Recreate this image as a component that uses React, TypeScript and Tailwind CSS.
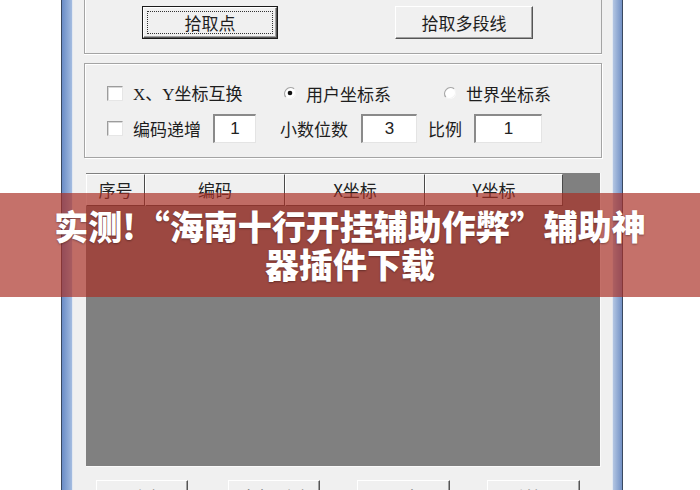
import type { ReactNode } from "react";

const font = { fontFamily: '"Noto Sans CJK SC", "Noto Sans", sans-serif' };

function Btn({
  children,
  focused,
  className,
}: {
  children?: ReactNode;
  focused?: boolean;
  className?: string;
}) {
  return (
    <div
      className={`bg-[#f0f0f0] ${focused ? "border border-[#1a1a1a]" : ""} ${className ?? ""}`}
    >
      <div className="h-full w-full border-t border-l border-white border-r border-b border-r-[#555] border-b-[#555] shadow-[inset_-1px_-1px_0_#a0a0a0] p-[3px]">
        <div
          className={`flex h-full w-full items-center justify-center text-[17px] text-[#1e1e1e] ${
            focused ? "border border-dotted border-[#333]" : ""
          }`}
        >
          {children}
        </div>
      </div>
    </div>
  );
}

function Check() {
  return (
    <div className="h-[15px] w-[16px] shrink-0 border-t border-l border-[#9c9c9c] border-r border-b border-r-[#e6e6e6] border-b-[#e6e6e6] bg-white shadow-[inset_1px_1px_0_#d8d8d8]" />
  );
}

function Radio({ checked }: { checked?: boolean }) {
  return (
    <svg width="14" height="14" viewBox="0 0 14 14" className="shrink-0">
      <circle cx="7" cy="7" r="6" fill="#fff" />
      <path d="M2.8 11.2 A6 6 0 0 1 11.2 2.8" fill="none" stroke="#a8a8a8" strokeWidth="1.3" />
      <path d="M11.2 2.8 A6 6 0 0 1 2.8 11.2" fill="none" stroke="#f4f4f4" strokeWidth="1.2" />
      {checked && <circle cx="7" cy="7" r="2.3" fill="#111" />}
    </svg>
  );
}

function Field({ value, w }: { value: string; w: string }) {
  return (
    <div
      className={`${w} flex h-[29px] shrink-0 items-center justify-center border-t-2 border-l-2 border-t-[#8a8a8a] border-l-[#8a8a8a] border-r border-b border-r-[#e4e4e4] border-b-[#e4e4e4] bg-white text-[17px] text-[#222]`}
      style={{ fontFamily: '"Liberation Sans", sans-serif' }}
    >
      {value}
    </div>
  );
}

function HeadCell({ label, w }: { label: string; w: string }) {
  return (
    <div
      className={`${w} flex h-full shrink-0 items-center justify-center border-t border-l border-white border-r border-b border-r-[#4a4a4a] border-b-[#4a4a4a] bg-[#f0f0f0] text-[17px] text-[#222]`}
    >
      {label}
    </div>
  );
}

export default function App() {
  return (
    <div className="relative h-[490px] w-[700px] overflow-hidden bg-white" style={font}>
      <div className="ml-[61px] flex h-full w-[562px]">
        <div className="w-px bg-[#3b4960]" />
        <div className="w-[10px] bg-gradient-to-r from-[#6a8cc6] to-[#a4bce0]" />
        <div className="w-px bg-[#e2e8f1]" />

        <div className="flex-1 bg-[#f0f0f0]">
          {/* group 1 */}
          <div className="ml-[11px] h-[54px] w-[518px] border-l border-r border-b border-[#a4a4a4] shadow-[inset_1px_0_0_#fff,0_1px_0_#fff]">
            <div className="flex pt-[6px]">
              <Btn focused className="ml-[57px] h-[33px] w-[136px]">
                拾取点
              </Btn>
              <Btn className="ml-[117px] h-[33px] w-[138px]">拾取多段线</Btn>
            </div>
          </div>

          {/* group 2 */}
          <div className="ml-[11px] mt-[9px] h-[95px] w-[518px] border border-[#a4a4a4] pl-[22px] pt-[21px] shadow-[inset_1px_1px_0_#fff,1px_1px_0_#fff] text-[17px] text-[#1e1e1e]">
            <div className="flex h-[16px] items-center">
              <div className="flex w-[176px] items-center">
                <Check />
                <span className="ml-[10px] leading-none">
                  <span style={{ fontFamily: '"Liberation Serif", serif' }}>X</span>、
                  <span style={{ fontFamily: '"Liberation Serif", serif' }}>Y</span>坐标互换
                </span>
              </div>
              <div className="flex w-[160px] items-center">
                <Radio checked />
                <span className="ml-[9px] leading-none">用户坐标系</span>
              </div>
              <div className="flex items-center">
                <Radio />
                <span className="ml-[9px] leading-none">世界坐标系</span>
              </div>
            </div>
            <div className="mt-[13px] flex h-[29px] items-center">
              <Check />
              <span className="ml-[10px]">编码递增</span>
              <Field value="1" w="ml-[12px] w-[43px]" />
              <span className="ml-[24px]">小数位数</span>
              <Field value="3" w="ml-[13px] w-[56px]" />
              <span className="ml-[11px]">比例</span>
              <Field value="1" w="ml-[12px] w-[68px]" />
            </div>
          </div>

          {/* list view */}
          <div className="ml-[13px] mt-[15px] h-[294px] w-[515px] border-r border-b border-[#fafafa] bg-[#808080] pt-px">
            <div className="flex h-[32px]">
              <HeadCell label="序号" w="w-[59px]" />
              <HeadCell label="编码" w="w-[140px]" />
              <HeadCell label="X坐标" w="w-[140px]" />
              <HeadCell label="Y坐标" w="w-[138px]" />
            </div>
          </div>

          {/* bottom buttons, cut off by the window edge */}
          <div className="mt-[13px] flex">
            <Btn className="ml-[23px] h-[34px] w-[92px]">
              <span className="text-[#777]">删除</span>
            </Btn>
            <Btn className="ml-[40px] h-[34px] w-[92px]">
              <span className="text-[#777]">全部删除</span>
            </Btn>
            <Btn className="ml-[37px] h-[34px] w-[93px]">
              <span className="text-[#777]">导出</span>
            </Btn>
            <Btn className="ml-[37px] h-[34px] w-[93px]">
              <span className="text-[#777]">关闭</span>
            </Btn>
          </div>
        </div>

        <div className="w-px bg-[#e2e8f1]" />
        <div className="w-[9px] bg-gradient-to-r from-[#b4c6e2] to-[#7391c5]" />
        <div className="w-px bg-[#3b4960]" />
      </div>

      {/* title banner */}
      <div className="absolute inset-x-0 top-[193px] flex h-[104px] flex-col items-center justify-center bg-[rgba(170,45,35,0.68)] text-[34px] font-black leading-[38px] text-white [text-shadow:0_1px_2px_rgba(0,0,0,0.35)]">
        <div>实测!“海南十行开挂辅助作弊”辅助神</div>
        <div>器插件下载</div>
      </div>
    </div>
  );
}
